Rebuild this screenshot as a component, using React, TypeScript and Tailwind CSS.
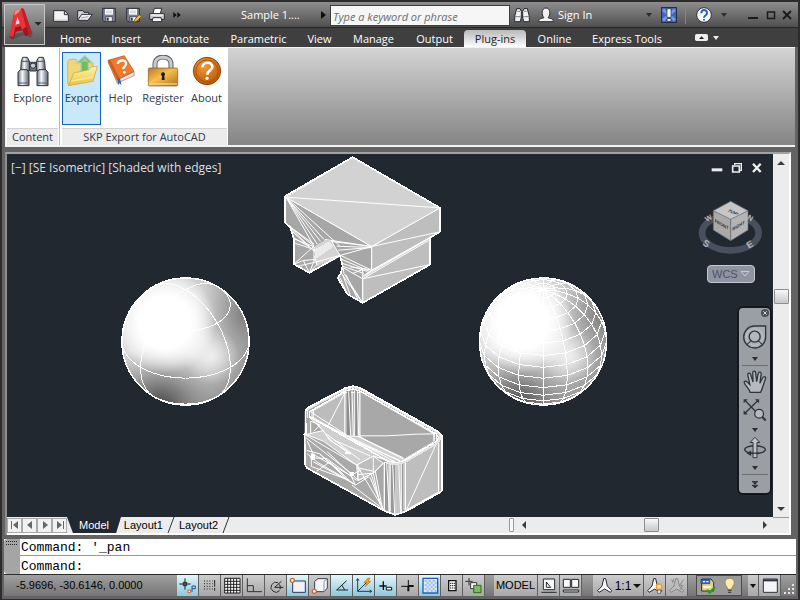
import type { ReactNode } from 'react'

type ArtProps = {
  box: string
  className: string
  children: ReactNode
}

function Art({ box, className, children }: ArtProps) {
  return (
    <svg
      viewBox={box}
      className={`shrink-0 ${className}`}
      fill="none"
      aria-hidden="true"
    >
      {children}
    </svg>
  )
}

/* ---------- Quick access icons ---------- */

function NewIcon() {
  return (
    <Art box="0 0 48 48" className="h-4 w-4">
      <path d="M2 11h33l11 11v21H2z" fill="#f4f4f6" stroke="#2c2f38" strokeWidth="3" />
      <path d="M34 12v11h11" fill="#c9ccd4" stroke="#2c2f38" strokeWidth="3" />
      <path d="M6 39h37" stroke="#c4c6cc" strokeWidth="3" />
    </Art>
  )
}

function OpenIcon() {
  return (
    <Art box="0 0 48 48" className="h-4 w-4">
      <path d="M2 40V11h15l4 5h14v6" fill="#d4d6dc" stroke="#2c2f38" strokeWidth="3" />
      <path d="M2 40l12-18h32L33 40z" fill="#eceef2" stroke="#2c2f38" strokeWidth="3" />
      <path d="M12 33l22-4" stroke="#9da1ac" strokeWidth="3" />
    </Art>
  )
}

function SaveIcon({ pencil = false }: { pencil?: boolean }) {
  return (
    <Art box="0 0 48 48" className="h-4 w-4">
      <path d="M5 4h38v40H9l-4-4z" fill="#7b8190" stroke="#2c2f38" strokeWidth="3" />
      <path d="M12 6h24v17H12z" fill="#fafafa" />
      <path d="M15 12h18M15 17h18" stroke="#b5b9c3" strokeWidth="2" />
      <path d="M14 29h20v14H14z" fill="#f0f0f0" stroke="#2c2f38" strokeWidth="2" />
      <path d="M17 32h6v9h-6z" fill="#2c2f38" />
      {pencil && (
        <path d="M27 46l3-10 13-13 6 6-13 13z" fill="#f3b73a" stroke="#6b4312" strokeWidth="2" />
      )}
    </Art>
  )
}

function PrintIcon() {
  return (
    <Art box="0 0 48 48" className="h-4 w-4">
      <path d="M12 20L16 4h22l-4 16z" fill="#fff" stroke="#2c2f38" strokeWidth="3" />
      <path d="M2 20h44v17H2z" fill="#c9ccd3" stroke="#2c2f38" strokeWidth="3" />
      <path d="M5 24h38" stroke="#fff" strokeWidth="3" />
      <path d="M12 32h24l3 12H9z" fill="#f7f7f7" stroke="#2c2f38" strokeWidth="3" />
    </Art>
  )
}

function SearchIcon() {
  return (
    <Art box="0 0 48 48" className="h-4 w-4">
      <path d="M17 12h14v14H17z" fill="#9a9da5" stroke="#23262e" strokeWidth="3" />
      <path d="M2 28L8 5h10l4 8v17l-3 14H2z" fill="#f1f1f3" stroke="#23262e" strokeWidth="3" />
      <path d="M46 28L40 5H30l-4 8v17l3 14h17z" fill="#f1f1f3" stroke="#23262e" strokeWidth="3" />
      <path d="M3 29h17M28 29h17M10 13h8M30 13h8" stroke="#7d818b" strokeWidth="3" />
    </Art>
  )
}

/* ---------- Ribbon icons ---------- */

function BinocularsIcon() {
  return (
    <Art box="0 0 96 96" className="h-8 w-8">
      <defs>
        <linearGradient id="barrel" x1="0" x2="1" y1="0" y2="0">
          <stop offset="0" stopColor="#6d7583" />
          <stop offset=".4" stopColor="#f6f8fb" />
          <stop offset="1" stopColor="#58606e" />
        </linearGradient>
      </defs>
      <path d="M37 22h22v26H37z" fill="#6f7782" stroke="#30343d" strokeWidth="3" />
      <path d="M13 20l4-13h14l7 13v26H11z" fill="url(#barrel)" stroke="#30343d" strokeWidth="3" />
      <path d="M83 20L79 7H65l-7 13v26h27z" fill="url(#barrel)" stroke="#30343d" strokeWidth="3" />
      <path d="M3 52l7-8h20l6 8v40H3z" fill="url(#barrel)" stroke="#30343d" strokeWidth="3" />
      <path d="M93 52l-7-8H66l-6 8v40h33z" fill="url(#barrel)" stroke="#30343d" strokeWidth="3" />
      <path d="M13 19h24M59 19h24" stroke="#4d5461" strokeWidth="3" />
      <circle cx="48" cy="32" r="8" fill="#c7ccd4" stroke="#30343d" strokeWidth="3" />
      <path d="M5 84h30M61 84h30" stroke="#5c6470" strokeWidth="3" />
    </Art>
  )
}

function ExportIcon() {
  return (
    <Art box="0 0 96 96" className="h-8 w-8">
      <defs>
        <linearGradient id="folder" x1="0" x2="0" y1="0" y2="1">
          <stop offset="0" stopColor="#fdf5b4" />
          <stop offset="1" stopColor="#e9c23f" />
        </linearGradient>
      </defs>
      <path d="M5 86V20l5-7h20l5 8h42l4 5v42z" fill="#efd676" stroke="#c9a53c" strokeWidth="2" />
      <path d="M56 2l24 22H67v28H45V24H32z" fill="#6fbf55" stroke="#b3cfb0" strokeWidth="4" />
      <path d="M56 8l12 12H44z" fill="#9ccf90" />
      <path d="M7 92l16-38 46-10 6-8 19-2-13 45z" fill="url(#folder)" stroke="#cda12d" strokeWidth="2" />
      <path d="M16 78l66-12" stroke="#f9e78f" strokeWidth="4" />
    </Art>
  )
}

function HelpBookIcon() {
  return (
    <Art box="0 0 96 96" className="h-8 w-8">
      <path d="M9 20l28 64 50-22v-12L35 76z" fill="#e9ecf2" stroke="#a7663c" strokeWidth="2" />
      <path d="M9 16L58 2l29 47-50 25z" fill="#f07a2b" stroke="#b9521b" strokeWidth="2" />
      <path d="M9 16l7-1 28 56-7 4z" fill="#cf5a1b" />
      <path d="M38 27c1-12 22-15 25-3 2 9-8 10-8 18" stroke="#fff" strokeWidth="7" />
      <circle cx="58" cy="52" r="4" fill="#fff" />
      <path d="M37 73l8-3 5 20-7-5-4 6z" fill="#1d6fc4" />
    </Art>
  )
}

function LockIcon() {
  return (
    <Art box="0 0 96 96" className="h-8 w-8">
      <defs>
        <linearGradient id="lock" x1="0" x2="1" y1="0" y2="1">
          <stop offset="0" stopColor="#b97a22" />
          <stop offset=".45" stopColor="#f6bf4e" />
          <stop offset="1" stopColor="#b0701a" />
        </linearGradient>
      </defs>
      <path d="M24 44V27C24-1 72-1 72 27v17" stroke="#5f6369" strokeWidth="15" />
      <path d="M24 44V27C24 0 72 0 72 27v17" stroke="#c9ccd1" strokeWidth="9" />
      <rect x="4" y="39" width="88" height="54" rx="4" fill="url(#lock)" stroke="#87561a" strokeWidth="2" />
      <path d="M6 87h84" stroke="#f6d594" strokeWidth="4" />
      <circle cx="48" cy="58" r="6" fill="#1a1a1a" />
      <path d="M46 58h5l2 17h-9z" fill="#1a1a1a" />
    </Art>
  )
}

function AboutIcon() {
  return (
    <Art box="0 0 96 96" className="h-8 w-8">
      <defs>
        <radialGradient id="about" cx=".4" cy=".3" r=".7">
          <stop offset="0" stopColor="#f39b3a" />
          <stop offset="1" stopColor="#c05806" />
        </radialGradient>
      </defs>
      <circle cx="48" cy="48" r="41" fill="url(#about)" stroke="#8a4207" strokeWidth="3" />
      <circle cx="48" cy="48" r="33" stroke="#a4560f" strokeWidth="3" />
      <path d="M34 37c1-18 31-18 30-1-1 11-15 10-15 23" stroke="#fff" strokeWidth="8" />
      <circle cx="48" cy="70" r="5" fill="#fff" />
    </Art>
  )
}

/* ---------- Model space geometry ---------- */

const ELEVATION = Math.atan(1 / Math.SQRT2)

type SphereProps = {
  cx: number
  cy: number
  r: number
  meridians: number[]
  latitudes: number[]
  step: number
}

function project(lat: number, lon: number, r: number) {
  const p = (lat * Math.PI) / 180
  const t = (lon * Math.PI) / 180
  const z = Math.sin(p)
  const side = Math.cos(p) * Math.sin(t)
  const depth = Math.cos(p) * Math.cos(t)
  return {
    x: side * r,
    y: (depth * Math.sin(ELEVATION) - z * Math.cos(ELEVATION)) * r,
    front: z * Math.sin(ELEVATION) + depth * Math.cos(ELEVATION) > -0.01,
  }
}

function trace(points: { x: number; y: number; front: boolean }[]) {
  let d = ''
  let down = false
  points.forEach((p) => {
    if (p.front) {
      d += `${down ? 'L' : 'M'}${p.x.toFixed(1)} ${p.y.toFixed(1)}`
    }
    down = p.front
  })
  return d
}

function range(from: number, to: number, step: number) {
  const out: number[] = []
  for (let v = from; v <= to + 0.001; v += step) out.push(v)
  return out
}

function Sphere({ cx, cy, r, meridians, latitudes, step }: SphereProps) {
  const lines = [
    ...meridians.map((lon) =>
      trace(range(-90, 90, step).map((lat) => project(lat, lon, r)))
    ),
    ...latitudes.map((lat) =>
      trace(range(0, 360, step * 2).map((lon) => project(lat, lon, r)))
    ),
  ]

  return (
    <g transform={`translate(${cx} ${cy})`}>
      <circle r={r} fill="url(#ballBase)" />
      <circle r={r} fill="url(#ballShade)" />
      <circle r={r} fill="url(#ballTop)" />
      <circle r={r} fill="url(#ballGlint)" />
      <circle r={r} fill="url(#ballLight)" />
      <path d={lines.join('')} stroke="#fff" shapeRendering="crispEdges" />
      <circle r={r} stroke="#fff" strokeWidth="1.500" shapeRendering="crispEdges" />
    </g>
  )
}

function SteppedBlock() {
  return (
    <g
      transform="translate(270 150) scale(.33333)"
      stroke="#fff"
      strokeWidth="3"
      strokeLinejoin="round"
      shapeRendering="crispEdges"
    >
      <path d="M48 143L305 291V362L278 388V460L232 434 203 385 213 370 218 350 210 320 118 370 72 344V268L60 232 45 220V143z" fill="#a7a7a7" />
      <path d="M305 291L510 175V247L481 264V345L278 460V380L305 362z" fill="#bebebe" />
      <path d="M248 23L510 175 305 291 48 143z" fill="#d2d2d2" />
      <path d="M132 292L165 272 185 276 210 318 140 352z" fill="#d4d4d4" stroke="none" />
      <path d="M132 300L178 276 192 290 138 328z" fill="#ebebeb" stroke="none" />
      <path d="M48 143L510 175M305 291L510 247M278 388L481 270M278 388L481 345M290 372L510 247M283 380L495 257M305 362L480 264" />
      <path d="M48 143L132 290M48 143L142 284M48 143L152 276M48 143L162 270M48 143L210 290M45 220L132 290M52 226L132 305M60 240L118 292M60 232L132 284M66 262L118 292M72 268L132 292V334M72 280L132 300M72 344L132 290M72 344L100 333 134 330 118 370M84 350L136 338 210 318M100 333L118 370M134 320L140 345 118 370" />
      <path d="M165 270L305 291M185 276L305 291M185 276L210 318M200 290L305 294M205 302L305 294M210 318L305 291M212 318L305 362M216 330L300 366M218 342L292 366M218 350L282 372M222 356L278 388M240 352L300 360M248 372L278 360V388" />
      <path d="M218 350L222 372 278 460M213 370L278 460M218 376L240 434M228 376L264 450M210 384L232 434M278 388V460" />
      <path d="M248 23L510 175V247L481 264V345L278 460 232 434 203 385 213 370 218 350 210 318 118 370 72 344V268L60 232 45 220V140z" strokeWidth="5" />
      <path d="M305 291V362" strokeWidth="4" />
    </g>
  )
}

function OpenBox() {
  return (
    <g
      transform="translate(290 375) scale(.33333)"
      stroke="#fff"
      strokeWidth="3"
      strokeLinejoin="round"
      shapeRendering="crispEdges"
    >
      <path d="M46 110L165 42 190 35 212 42 446 172 457 186V348L345 412 315 421 285 410 50 280 45 270z" fill="#a9a9a9" />
      <path d="M70 108L165 54V184L100 150 70 130z" fill="#bcbcbc" />
      <path d="M165 54H210V186H165z" fill="#b0b0b0" />
      <path d="M172 50h10v134h-10zM192 50h8v134h-8z" fill="#8e8e8e" stroke="none" />
      <path d="M210 50L432 178V202L330 262 210 186z" fill="#a8a8a8" />
      <path d="M210 184L290 184 380 179 435 178M165 54L115 152" />
      <path d="M346 262L446 204V352L346 408z" fill="#bebebe" />
      <path d="M283 264L346 262V410L315 420 283 408z" fill="#989898" />
      <path d="M294 266h8v144h-8zM322 268h10v148h-10zM338 266h8v142h-8z" fill="#c6c6c6" stroke="none" />
      <path d="M283 264V408M290 266L298 412M300 268V414M308 268L314 418M318 268V418M326 268L332 416M334 266V414M346 262V408M438 210L350 404M446 204V352" />
      <path d="M176 50L182 184M186 48L190 184M194 48V184M202 50L206 184M170 184L340 256" />
      <path d="M60 130L170 184 205 186 345 256 320 266 250 245 200 272 100 200 48 180 100 168z" fill="#cfcfcf" />
      <path d="M200 272L250 245 280 266 250 296 204 318z" fill="#bdbdbd" />
      <path d="M62 112L300 266M66 128L315 262M100 150L330 260M170 190L330 258M205 186L340 250M80 146L125 200 182 240M100 168L118 196 176 232M112 180L210 256M130 196L240 244M72 170L90 152 62 140V176" />
      <path d="M48 182L200 272 283 408M48 190L188 300 204 318M52 200L70 240 180 302M50 228L90 238 176 320M52 238L80 262 190 326M60 250L110 252 200 318M64 236V276L180 318M70 262L196 330M90 240L160 300M112 232L180 296M80 290L120 262 190 330M204 270V318L250 296V245M204 280L250 290M204 300L250 296L280 266M188 300L214 286M180 296L196 332 238 306" />
      <path d="M250 296L270 390M256 290L276 396M244 300L272 390M240 308L280 406M186 332L280 404" />
      <path d="M165 232h18v8h-18zM180 292h12v14h-12zM64 240h10v16h-10z" fill="#fff" stroke="none" />
      <path d="M58 112L165 50 190 43 210 50 438 178 446 190 438 202 345 257 318 266 298 262 60 128z" stroke="#fff" strokeWidth="4" />
      <path d="M50 106L165 44 190 37 212 44 446 176 452 190 442 206 346 262 316 270 292 264" stroke="#e4e4e4" strokeWidth="6" />
      <path d="M432 178V200M440 178V200M52 104V130M66 110V130" />
      <path d="M46 110L52 100 165 41 190 35 212 41 446 172 457 186V348L446 356 345 412 315 421 285 410 50 280 45 270V236L43 180 48 176z" strokeWidth="5" />
    </g>
  )
}

function ModelScene() {
  return (
    <svg
      viewBox="7 155 766 362"
      className="h-full w-full"
      fill="none"
      role="img"
      aria-label="Model space"
    >
      <defs>
        <radialGradient id="ballBase" cx=".34" cy=".36" r=".72">
          <stop offset="0" stopColor="#fff" />
          <stop offset=".45" stopColor="#e2e2e2" />
          <stop offset="1" stopColor="#979797" />
        </radialGradient>
        <radialGradient id="ballShade" cx=".3" cy="1.020" r=".5">
          <stop offset="0" stopColor="#3f3f3f" />
          <stop offset=".4" stopColor="#6c6c6c" stopOpacity=".7" />
          <stop offset="1" stopColor="#a0a0a0" stopOpacity="0" />
        </radialGradient>
        <radialGradient id="ballTop" cx="1" cy=".28" r=".42">
          <stop offset="0" stopColor="#777" />
          <stop offset="1" stopColor="#a0a0a0" stopOpacity="0" />
        </radialGradient>
        <radialGradient id="ballGlint" cx=".71" cy=".62" r=".22">
          <stop offset="0" stopColor="#fff" stopOpacity=".7" />
          <stop offset="1" stopColor="#fff" stopOpacity="0" />
        </radialGradient>
        <radialGradient id="ballLight" cx=".34" cy=".35" r=".4">
          <stop offset="0" stopColor="#fff" />
          <stop offset=".5" stopColor="#fff" />
          <stop offset="1" stopColor="#fff" stopOpacity="0" />
        </radialGradient>
      </defs>
      <Sphere
        cx={185.5}
        cy={342}
        r={63.5}
        meridians={[45, 135, 225, 315]}
        latitudes={[-45, 0, 45]}
        step={5}
      />
      <Sphere
        cx={543}
        cy={342}
        r={63.5}
        meridians={range(0, 337.5, 22.5)}
        latitudes={range(-78.75, 78.75, 11.25)}
        step={11.25}
      />
      <SteppedBlock />
      <OpenBox />
    </svg>
  )
}

function ViewCube() {
  return (
    <Art box="26 150 198 165" className="h-[55px] w-[66px]">
      <ellipse cx="123" cy="249" rx="85" ry="52" stroke="#48505d" strokeWidth="20" />
      <path d="M72 182L124 206V272L72 240z" fill="#a9a9a9" stroke="#6a6d72" strokeWidth="2" />
      <path d="M176 182L124 206V272L176 240z" fill="#b4b4b4" stroke="#6a6d72" strokeWidth="2" />
      <path d="M124 154L176 182 124 208 72 182z" fill="#c6c6c6" stroke="#6a6d72" strokeWidth="2" />
      <g fill="#2e3136" fontFamily="Liberation Sans, sans-serif" fontWeight="700">
        <text transform="matrix(.88 .47 -.88 .47 113 182)" fontSize="15">TOP</text>
        <text transform="matrix(.85 .5 0 1 76 216)" fontSize="14">FRONT</text>
        <text transform="matrix(.85 -.5 0 1 129 243)" fontSize="14">RIGHT</text>
      </g>
      <g fill="#b2b5b9" fontFamily="Liberation Sans, sans-serif" fontWeight="700" fontSize="28">
        <text transform="translate(38 284) rotate(30)">S</text>
        <text transform="translate(178 296) rotate(-30)">E</text>
        <text transform="translate(172 206) rotate(30)" fontSize="22">N</text>
        <text transform="translate(52 216) rotate(-30)" fontSize="22">W</text>
      </g>
    </Art>
  )
}

/* ---------- Navigation bar ---------- */

function DropArrow() {
  return (
    <Art box="0 0 8 4" className="h-1 w-2">
      <path d="M1 0h6L4 4z" fill="#2a2d32" />
    </Art>
  )
}

function NavigationBar() {
  return (
    <div className="absolute right-px top-[152px] flex h-[189px] w-[35px] flex-col items-center rounded-md border-2 border-[#14181e] bg-[#9b9ea3]">
      <button type="button" aria-label="Close navigation bar" className="mr-px mt-px self-end">
        <Art box="0 0 24 24" className="h-2 w-2">
          <circle cx="12" cy="12" r="12" fill="#4b4e54" />
          <path d="M7 7l10 10M17 7L7 17" stroke="#d6d8dc" strokeWidth="3" />
        </Art>
      </button>
      <button type="button" aria-label="Steering wheel" className="mt-2 flex flex-col items-center gap-2">
        <Art box="157 109 70 70" className="h-6 w-6">
          <path d="M190 112h33v32a32 32 0 1 1-33-32z" fill="#a9adb4" stroke="#33373e" strokeWidth="4" />
          <circle cx="191" cy="144" r="24" stroke="#bfc2c7" strokeWidth="3" />
          <circle cx="191" cy="143" r="16" fill="#b3b6bc" stroke="#33373e" strokeWidth="4" />
          <path d="M180 155l-13 13M202 155l13 13" stroke="#33373e" strokeWidth="3" />
        </Art>
        <DropArrow />
      </button>
      <hr className="mt-1 w-[26px] border-[#6b6e73]" />
      <button type="button" aria-label="Pan" className="mt-1">
        <Art box="154 234 74 74" className="h-6 w-6">
          <path
            d="M176 303c-2-12-17-22-18-30-1-6 5-6 9-2l8 8-6-29c-1-8 7-9 9-1l7 22-1-28c0-7 9-7 9 0l3 27 5-25c2-7 10-5 9 2l-4 28 9-17c4-7 11-3 8 4-6 15-9 31-15 41z"
            fill="#b6b9c0"
            stroke="#2f333a"
            strokeWidth="4"
          />
        </Art>
      </button>
      <button type="button" aria-label="Zoom" className="mt-1 flex flex-col items-center gap-1.5">
        <Art box="154 318 76 74" className="h-6 w-6">
          <path d="M160 324l40 42M202 324l-43 42" stroke="#2f333a" strokeWidth="4" />
          <path d="M156 321h13l-13 13zM205 321v13l-13-13zM156 369v-13l13 13z" fill="#2f333a" />
          <circle cx="205" cy="367" r="14" fill="#b6b9c0" stroke="#2f333a" strokeWidth="4" />
          <path d="M215 377l11 11" stroke="#2f333a" strokeWidth="7" />
        </Art>
        <DropArrow />
      </button>
      <button type="button" aria-label="Orbit" className="mt-1 flex flex-col items-center gap-1.5">
        <Art box="154 434 74 70" className="h-6 w-6">
          <ellipse cx="191" cy="474" rx="32" ry="12" stroke="#2f333a" strokeWidth="4" />
          <path d="M185 499v-47h-9l15-16 15 16h-9v47z" fill="#c0c3c8" stroke="#2f333a" strokeWidth="3" />
          <path d="M165 485l14-8v17z" fill="#2f333a" />
          <path d="M176 485h26" stroke="#2f333a" strokeWidth="4" />
        </Art>
        <DropArrow />
      </button>
      <hr className="mt-1 w-[26px] border-[#6b6e73]" />
      <button type="button" aria-label="Customize navigation bar" className="mt-1.5 h-2">
        <Art box="0 0 24 24" className="h-2 w-2">
          <path d="M3 2h18M3 13h18" stroke="#22262c" strokeWidth="3" />
          <path d="M5 4h14l-7 7zM5 15h14l-7 7z" fill="#22262c" />
        </Art>
      </button>
    </div>
  )
}

/* ---------- Header ---------- */

const ribbonTabs = [
  { label: 'Home', className: 'w-[51px]' },
  { label: 'Insert', className: 'w-[50px]' },
  { label: 'Annotate', className: 'w-[69px]' },
  { label: 'Parametric', className: 'w-[77px]' },
  { label: 'View', className: 'w-[45px]' },
  { label: 'Manage', className: 'w-[63px]' },
  { label: 'Output', className: 'w-[59px]' },
  { label: 'Plug-ins', className: 'w-[62px]' },
  { label: 'Online', className: 'w-[57px]' },
  { label: 'Express Tools', className: 'w-[88px]' },
]

function Header() {
  return (
    <header className="flex h-[45px] shrink-0 bg-[linear-gradient(#8e8e8e,#4f4f4f_25px,#262626_25px,#262626_26px,#3f3f3f_26px)] text-[11px]">
      <button
        type="button"
        aria-label="Application menu"
        className="ml-0.5 mt-0.5 flex h-[41px] w-[41px] shrink-0 items-center justify-center border border-[#c6c6c6] bg-linear-to-b from-[#a4a4a4] to-[#5a5a5a]"
      >
        <Art box="20 20 110 110" className="h-9 w-9">
          <path d="M25 105l8 15 40-14 20 8 6-12-10-8z" fill="#3f3f3f" opacity=".5" />
          <path d="M43 32l25-8 28 74-20 12-9-19-20 5-7 21-13-4z" fill="#a3151d" />
          <path d="M43 32l21-8 14 56-12 10-4-12-17 5-6 28-12-2z" fill="#e5353b" />
          <path d="M64 24l8 2 24 72-10 6z" fill="#c11f27" />
          <path d="M52 50l7 20-13 4z" fill="#f3dede" />
          <path d="M43 32l21-8-8 12-13 10z" fill="#f58a8c" />
          <path d="M104 66h22l-11 11z" fill="#24272e" />
        </Art>
      </button>
      <div className="flex min-w-0 flex-1 flex-col">
        <div className="flex h-[26px] shrink-0 items-center">
          <div className="ml-2 flex items-center gap-2">
            <button type="button" aria-label="New"><NewIcon /></button>
            <button type="button" aria-label="Open"><OpenIcon /></button>
            <button type="button" aria-label="Save"><SaveIcon /></button>
            <button type="button" aria-label="Save As"><SaveIcon pencil /></button>
            <button type="button" aria-label="Plot"><PrintIcon /></button>
            <button type="button" aria-label="More">
              <Art box="0 0 24 24" className="h-2 w-2">
                <path d="M1 3l10 9-10 9zM13 3l10 9-10 9z" fill="#0d0d0d" />
              </Art>
            </button>
          </div>
          <span className="ml-15 w-20 truncate text-white">Sample 1....</span>
          <Art box="0 0 5 8" className="h-2 w-[5px]">
            <path d="M0 0l5 4-5 4z" fill="#0d0d0d" />
          </Art>
          <input
            type="text"
            aria-label="Search"
            placeholder="Type a keyword or phrase"
            className="ml-1 h-[21px] w-[180px] border border-[#3f3f3f] bg-[#f6f6f6] px-0.5 pt-0.5 italic text-[#6c6c6c] placeholder:text-[#6c6c6c]"
          />
          <button type="button" aria-label="Search help" className="ml-1">
            <SearchIcon />
          </button>
          <button type="button" className="ml-2 flex items-center gap-1 text-white">
            <Art box="0 0 48 48" className="h-4 w-4">
              <path d="M2 44c0-10 8-9 16-12-8-8-8-29 6-29s14 21 6 29c8 3 16 2 16 12z" fill="#f1f1f1" stroke="#2c2f38" strokeWidth="3" />
            </Art>
            Sign In
          </button>
          <div className="ml-auto flex items-center pr-1.5">
            <DropArrow />
            <button type="button" aria-label="Exchange" className="ml-2">
              <Art box="0 0 48 48" className="h-4 w-4">
                <path d="M1 1h46v46H1z" fill="#3f67bb" stroke="#1a2238" strokeWidth="3" />
                <path d="M6 8l36 32M42 8L6 40" stroke="#7799da" strokeWidth="9" />
                <path d="M18 5h12v26H18zM18 35h12v8H18z" fill="#fff" stroke="#1a2238" strokeWidth="2" />
              </Art>
            </button>
            <span className="ml-2 h-[18px] w-px bg-[#858585]" />
            <button type="button" aria-label="Help" className="ml-2.5 flex items-center gap-2">
              <Art box="0 0 48 48" className="h-4 w-4">
                <circle cx="24" cy="24" r="22" fill="#f8f8f8" stroke="#30343d" strokeWidth="3" />
                <path d="M16 19c0-13 17-13 17-1 0 8-9 7-9 14" stroke="#2464b9" strokeWidth="6" />
                <circle cx="24" cy="38" r="3" fill="#2464b9" />
              </Art>
              <DropArrow />
            </button>
            <button type="button" aria-label="Minimize" className="ml-5">
              <Art box="0 0 10 10" className="h-2.5 w-2.5">
                <path d="M0 8h10" stroke="#1b1b1b" strokeWidth="2" />
              </Art>
            </button>
            <button type="button" aria-label="Maximize" className="ml-2">
              <Art box="0 0 10 10" className="h-2.5 w-2.5">
                <path d="M1.500 2h7v6.500h-7z" stroke="#1b1b1b" strokeWidth="1.500" />
              </Art>
            </button>
            <button type="button" aria-label="Close" className="ml-1.5">
              <Art box="0 0 10 10" className="h-2.5 w-2.5">
                <path d="M1 1l8 8M9 1L1 9" stroke="#1b1b1b" strokeWidth="2" />
              </Art>
            </button>
          </div>
        </div>
        <nav className="ml-[5px] flex min-w-0 flex-1 items-end text-white">
          {ribbonTabs.map((tab) => (
            <button
              key={tab.label}
              type="button"
              className={`h-[17px] shrink-0 whitespace-nowrap leading-4 ${tab.className} ${
                tab.label === 'Plug-ins'
                  ? 'rounded-t-sm bg-linear-to-b from-[#b9b9b9] to-white text-[#1e1e1e]'
                  : ''
              }`}
            >
              {tab.label}
            </button>
          ))}
          <button type="button" aria-label="Minimize ribbon" className="mb-1.5 ml-6 flex items-center gap-1">
            <Art box="0 0 39 21" className="h-[7px] w-[13px]">
              <rect width="39" height="21" rx="5" fill="#eee" />
              <path d="M12 15h15l-7-8z" fill="#222" />
            </Art>
            <Art box="0 0 8 4" className="h-1 w-2">
              <path d="M1 0h6L4 4z" fill="#eee" />
            </Art>
          </button>
        </nav>
      </div>
    </header>
  )
}

const exportCommands = [
  { label: 'Export', icon: <ExportIcon />, className: 'w-[39px] border-[#1364b8] bg-[#c9e8fa]' },
  { label: 'Help', icon: <HelpBookIcon />, className: 'w-[39px] border-transparent' },
  { label: 'Register', icon: <LockIcon />, className: 'w-[46px] border-transparent' },
  { label: 'About', icon: <AboutIcon />, className: 'w-[41px] border-transparent' },
]

function Ribbon() {
  return (
    <section className="mx-[3px] flex h-[100px] shrink-0 border-b-2 border-l border-t border-[#f2f2f2] bg-linear-to-b from-[#d4d4d4] to-[#858585] text-[11px] text-[#2e3a4e]">
      <div className="flex w-[54px] flex-col border-r border-[#b9b9b9] bg-white">
        <button type="button" className="mt-[7px] flex flex-1 flex-col items-center gap-1">
          <BinocularsIcon />
          Explore
        </button>
        <div className="mx-px h-[17px] border-t border-[#d2d2d2] bg-[#ececec] text-center leading-4">
          Content
        </div>
      </div>
      <div className="flex w-[168px] flex-col bg-white pl-0.5">
        <div className="flex flex-1 pt-1">
          {exportCommands.map((command) => (
            <button
              key={command.label}
              type="button"
              className={`flex h-[73px] flex-col items-center gap-1 whitespace-nowrap border pt-0.5 ${command.className}`}
            >
              {command.icon}
              {command.label}
            </button>
          ))}
        </div>
        <div className="mr-px h-[17px] border-t border-[#d2d2d2] bg-[#ececec] text-center leading-4">
          SKP Export for AutoCAD
        </div>
      </div>
    </section>
  )
}

/* ---------- Drawing window ---------- */

function Arrow({ d }: { d: string }) {
  return (
    <Art box="0 0 8 8" className="h-2 w-2">
      <path d={d} fill="#3c3c3c" />
    </Art>
  )
}

function DocumentControls() {
  return (
    <div className="absolute right-2.5 top-2 flex gap-2">
      <button type="button" aria-label="Minimize drawing">
        <Art box="0 0 36 36" className="h-3 w-3">
          <path d="M2 19h32v9H2z" fill="#eee" />
        </Art>
      </button>
      <button type="button" aria-label="Restore drawing">
        <Art box="0 0 36 36" className="h-3 w-3">
          <path d="M11 9V5h20v20h-4" stroke="#eee" strokeWidth="4" />
          <path d="M5 12h20v18H5z" stroke="#eee" strokeWidth="5" />
        </Art>
      </button>
      <button type="button" aria-label="Close drawing">
        <Art box="0 0 36 36" className="h-3 w-3">
          <path d="M6 5l23 25M29 5L6 30" stroke="#eee" strokeWidth="7" />
        </Art>
      </button>
    </div>
  )
}

function VerticalScroll() {
  return (
    <div className="flex w-4 shrink-0 flex-col items-center bg-[#ececec]">
      <button type="button" aria-label="Scroll up" className="flex h-[17px] items-center">
        <Arrow d="M0 6l4-4 4 4z" />
      </button>
      <div className="flex-[118]" />
      <div className="h-[15px] w-[15px] rounded-[1px] border border-[#8d8d8d] bg-linear-to-b from-[#f8f8f8] to-[#c8c8c8]" />
      <div className="flex-[195]" />
      <button type="button" aria-label="Scroll down" className="flex h-[17px] items-center">
        <Arrow d="M0 2h8L4 6z" />
      </button>
    </div>
  )
}

const sheetArrows = [
  { label: 'First layout', d: 'M0 0h1v8H0zM7 0v8L2 4z' },
  { label: 'Previous layout', d: 'M6 0v8L1 4z' },
  { label: 'Next layout', d: 'M2 0v8l5-4z' },
  { label: 'Last layout', d: 'M7 0h1v8H7zM1 0v8l5-4z' },
]

function SheetEdge() {
  return (
    <Art box="0 0 8 16" className="ml-1 h-4 w-2">
      <path d="M7 0L1 16" stroke="#333" />
    </Art>
  )
}

function SheetBar() {
  return (
    <div className="flex h-[18px] shrink-0 items-center border-b-2 border-white bg-[#ececec] font-['Liberation_Sans',sans-serif] text-[11px] text-black">
      {sheetArrows.map((arrow) => (
        <button
          key={arrow.label}
          type="button"
          aria-label={arrow.label}
          className="flex h-[15px] w-[15px] items-center justify-center border border-[#aaa] bg-[#f2f2f2]"
        >
          <Art box="0 0 8 8" className="h-2 w-2">
            <path d={arrow.d} fill="#666" />
          </Art>
        </button>
      ))}
      <button
        type="button"
        className="h-4 w-[54px] bg-[#212830] leading-4 text-white [clip-path:polygon(0_0,100%_0,91%_100%,11%_100%)]"
      >
        Model
      </button>
      <button type="button" className="h-4 w-[42px] text-right leading-4">Layout1</button>
      <SheetEdge />
      <button type="button" className="ml-1 h-4 leading-4">Layout2</button>
      <SheetEdge />
      <div className="ml-auto flex w-[260px] items-center">
        <span className="h-3.5 w-[5px] rounded-[1px] border border-[#9b9b9b] bg-[#f8f8f8]" />
        <button type="button" aria-label="Scroll left" className="ml-1.5"><Arrow d="M6 0v8L2 4z" /></button>
        <span className="flex-[115]" />
        <span className="h-3.5 w-[15px] rounded-[1px] border border-[#8d8d8d] bg-linear-to-b from-[#f8f8f8] to-[#c8c8c8]" />
        <span className="flex-[101]" />
        <button type="button" aria-label="Scroll right"><Arrow d="M2 0v8l4-4z" /></button>
      </div>
      <span className="ml-1 h-full w-4 shrink-0 border-t border-[#9b9b9b]" />
    </div>
  )
}

function DrawingWindow() {
  return (
    <main className="ml-[3px] mr-[7px] mt-[5px] flex min-h-0 flex-1 flex-col border-l-2 border-r-2 border-t-2 border-l-[#8d8d8d] border-r-white border-t-[#a2a2a2]">
      <div className="flex min-h-0 flex-1">
        <div className="relative min-w-0 flex-1 bg-[#212830]">
          <ModelScene />
          <p className="absolute left-1 top-1.5 text-xs leading-4 text-[#dedfe1]">
            [−] [SE Isometric] [Shaded with edges]
          </p>
          <DocumentControls />
          <div className="absolute right-[9px] top-[46px] flex flex-col items-center gap-2.5">
            <ViewCube />
            <button
              type="button"
              className="flex h-[18px] w-12 items-center justify-between rounded border border-[#c5c8d2] bg-[#8f94a3] px-1 font-['Liberation_Sans',sans-serif] text-[11px] text-[#4e5360]"
            >
              WCS
              <Art box="0 0 10 6" className="h-1.5 w-2.5">
                <path d="M1 .500h8L5 5z" stroke="#c9ccd6" />
              </Art>
            </button>
          </div>
          <NavigationBar />
        </div>
        <VerticalScroll />
      </div>
      <SheetBar />
    </main>
  )
}

function CommandLine() {
  return (
    <section className="mx-0.5 mt-1 flex h-[35px] shrink-0 bg-white font-['Liberation_Mono',monospace] text-[13px] text-black">
      <div className="w-4 shrink-0 rounded-l bg-[#a5a5a5] pl-0.5 pt-0.5">
        <Art box="0 0 12 4" className="h-1 w-3">
          <path d="M0 .500h12M0 3.500h12" stroke="#222" strokeDasharray="1 1" />
        </Art>
      </div>
      <div className="flex-1">
        <div className="h-[17px] border-b border-[#999] pl-px leading-[18px]">Command: '_pan</div>
        <label className="flex h-[18px] pl-px leading-[22px]">
          Command:
          <input type="text" className="ml-2 min-w-0 flex-1 outline-none" />
        </label>
      </div>
    </section>
  )
}

/* ---------- Status bar ---------- */

const toggles: { label: string; on: boolean; art: ReactNode }[] = [
  {
    label: 'Infer constraints',
    on: true,
    art: (
      <>
        <path d="M4 24h34M21 7v34" stroke="#222" strokeWidth="3" />
        <path d="M16 19h10v10H16z" stroke="#222" strokeWidth="3" />
        <path d="M42 48V30h10v8H42" stroke="#2450a0" strokeWidth="3" />
        <path d="M30 42h8v8h-8z" fill="#fff" stroke="#d0602a" strokeWidth="3" />
      </>
    ),
  },
  {
    label: 'Snap',
    on: false,
    art: (
      <>
        <path d="M12 15h26M12 23h26M12 31h26M12 39h26" stroke="#222" strokeWidth="3" strokeDasharray="3 5" />
        <path d="M44 12v32" stroke="#222" strokeWidth="3" strokeDasharray="20 4" />
      </>
    ),
  },
  {
    label: 'Grid',
    on: false,
    art: (
      <path d="M8 7h46v44H8zM17 7v44M26 7v44M35 7v44M44 7v44M8 16h46M8 25h46M8 34h46M8 43h46" fill="#fff" stroke="#222" strokeWidth="3" />
    ),
  },
  {
    label: 'Ortho',
    on: false,
    art: <path d="M10 7v40h44M10 29h18v18" stroke="#333" strokeWidth="3" />,
  },
  {
    label: 'Polar',
    on: false,
    art: (
      <>
        <path d="M36 20a15 15 0 1 0 5 24" stroke="#333" strokeWidth="3" />
        <path d="M46 16L26 34h26M38 24c5 3 6 9 4 16" stroke="#222" strokeWidth="3" />
      </>
    ),
  },
  {
    label: 'Object snap',
    on: true,
    art: (
      <>
        <path d="M14 15h38v34H14z" fill="#f1f2f8" stroke="#2c3950" strokeWidth="3" />
        <circle cx="13" cy="13" r="6" fill="#fff" stroke="#dc6224" strokeWidth="4" />
      </>
    ),
  },
  {
    label: '3D object snap',
    on: false,
    art: (
      <>
        <path d="M14 16l10-8h28v28l-10 11H14z" fill="#f6f6fa" stroke="#3a4150" strokeWidth="3" />
        <path d="M42 16v30M42 16l9-7" stroke="#8f95a2" strokeWidth="3" />
        <circle cx="13" cy="46" r="6" fill="#fff" stroke="#dc6224" strokeWidth="4" />
      </>
    ),
  },
  {
    label: 'Object snap tracking',
    on: true,
    art: <path d="M44 14L14 42h34M30 28l8 14" stroke="#222" strokeWidth="3" />,
  },
  {
    label: 'Dynamic UCS',
    on: true,
    art: (
      <>
        <path d="M11 8v38h42M11 46l30-30M7 14l4-6 4 6M47 42l6 4-6 4" stroke="#2c3950" strokeWidth="3" />
        <path d="M42 6L30 20h9l-5 12 16-16h-8l6-9z" fill="#f4a52c" stroke="#c36a16" strokeWidth="2" />
      </>
    ),
  },
  {
    label: 'Dynamic input',
    on: true,
    art: (
      <>
        <path d="M10 30h22M22 16v26" stroke="#111" strokeWidth="4" />
        <path d="M31 34h16v8H31z" fill="#fff" stroke="#111" strokeWidth="3" />
      </>
    ),
  },
  {
    label: 'Lineweight',
    on: false,
    art: (
      <>
        <path d="M10 31h22M31 12v20" stroke="#111" strokeWidth="3" />
        <path d="M31 30h16M31 30v16" stroke="#111" strokeWidth="6" />
      </>
    ),
  },
  {
    label: 'Transparency',
    on: true,
    art: (
      <>
        <path d="M9 7h44v44H9z" fill="#dfecf8" stroke="#1d5fb5" strokeWidth="4" />
        <path d="M14 15h34M14 27h34M14 39h34" stroke="#9cbfe6" strokeWidth="6" strokeDasharray="6 6" />
        <path d="M20 21h30M20 33h30M20 45h30" stroke="#9cbfe6" strokeWidth="6" strokeDasharray="6 6" />
      </>
    ),
  },
  {
    label: 'Quick properties',
    on: false,
    art: (
      <>
        <path d="M20 14h22v30H20z" fill="#fff" stroke="#111" strokeWidth="4" />
        <path d="M24 22h15M24 29h15M24 36h15" stroke="#111" strokeWidth="3" strokeDasharray="4 2" />
      </>
    ),
  },
  {
    label: 'Selection cycling',
    on: false,
    art: (
      <>
        <path d="M4 16h22M15 6v22" stroke="#333" strokeWidth="3" />
        <path d="M20 20h18v18H20z" fill="#fff" stroke="#333" strokeWidth="3" />
        <path d="M29 28h22v22H29z" fill="#7dbb5c" stroke="#2b6a1f" strokeWidth="3" />
      </>
    ),
  },
]

function ScaleMark({ faded = false, children }: { faded?: boolean; children?: ReactNode }) {
  return (
    <Art box="0 0 60 60" className="h-5 w-5">
      <path
        d="M26 8h6l5 22 13 14-4 5-17-10-17 10-4-5 13-14z"
        fill={faded ? '#bdbdbd' : '#fafafa'}
        stroke={faded ? '#888' : '#252830'}
        strokeWidth="3"
      />
      {children}
    </Art>
  )
}

const cell = 'flex h-[21px] shrink-0 items-center justify-center border-r border-[#5f5f5f] bg-linear-to-b from-[#cdcdcd] to-[#a8a8a8]'

function StatusBar() {
  return (
    <footer className="mx-0.5 mb-[3px] flex h-[22px] shrink-0 items-end border-t border-[#2b2b2b] bg-linear-to-b from-[#a0a0a0] to-[#757575] font-['Liberation_Sans',sans-serif] text-[11px] text-black">
      <div className="flex h-[21px] min-w-0 flex-1 items-center truncate pl-3">
        -5.9696, -30.6146, 0.0000
      </div>
      {toggles.map((toggle) => (
        <button
          key={toggle.label}
          type="button"
          aria-label={toggle.label}
          aria-pressed={toggle.on}
          className={`flex h-[21px] w-[22px] shrink-0 items-center justify-center border-r border-[#5f5f5f] bg-linear-to-b ${
            toggle.on ? 'from-[#e3f6fb] to-[#8cc8dc]' : 'from-[#cdcdcd] to-[#a8a8a8]'
          }`}
        >
          <Art box="0 0 60 60" className="h-5 w-5">{toggle.art}</Art>
        </button>
      ))}
      <span className="w-[9px] shrink-0" />
      <button type="button" className={`${cell} w-[44px]`}>MODEL</button>
      <button type="button" aria-label="Quick view layouts" className={`${cell} w-[22px]`}>
        <Art box="0 0 60 60" className="h-5 w-5">
          <path d="M13 9h34v32H13z" fill="#f8f8f8" stroke="#252830" strokeWidth="3" />
          <path d="M7 49h46" stroke="#252830" strokeWidth="3" />
          <path d="M22 18v16h13z" stroke="#252830" strokeWidth="3" />
        </Art>
      </button>
      <button type="button" aria-label="Quick view drawings" className={`${cell} w-[22px]`}>
        <Art box="0 0 60 60" className="h-5 w-5">
          <path d="M7 10h21v24H7zM32 10h21v24H32z" fill="#f8f8f8" stroke="#252830" strokeWidth="3" />
          <path d="M7 42h46v6H7z" fill="#ddd" stroke="#252830" strokeWidth="3" />
        </Art>
      </button>
      <span className="w-[11px] shrink-0" />
      <button type="button" aria-label="Annotation scale" className={`${cell} w-[51px] text-xs`}>
        <ScaleMark />
        1:1
        <Art box="0 0 8 4" className="ml-0.5 h-1 w-2"><path d="M0 0h8L4 4z" fill="#111" /></Art>
      </button>
      <button type="button" aria-label="Annotation visibility" className={`${cell} w-[22px]`}>
        <ScaleMark>
          <circle cx="42" cy="32" r="8" fill="#ffe3a0" stroke="#e9a040" strokeWidth="4" />
          <path d="M38 42h9v10h-9z" fill="#f3f3f3" stroke="#444" strokeWidth="2" />
        </ScaleMark>
      </button>
      <button type="button" aria-label="Automatic scales" className={`${cell} w-[22px]`}>
        <ScaleMark faded>
          <path d="M12 10l10 10M20 8l-4 12" stroke="#8a8a8a" strokeWidth="3" />
          <path d="M50 10L38 28h10L36 46" stroke="#8a8a8a" strokeWidth="3" />
        </ScaleMark>
      </button>
      <div className="ml-2 mr-1.5 flex h-[21px] w-[46px] shrink-0 items-center justify-around border border-[#4b4b4b] bg-[#9a9a9a]">
        <Art box="0 0 54 54" className="h-[18px] w-[18px]">
          <path d="M8 6h28l8 10v26H8z" fill="#e9d579" stroke="#1c2f55" strokeWidth="3" />
          <path d="M6 8h26v12H6z" fill="#3a6fb8" stroke="#1c2f55" strokeWidth="2" />
          <path d="M12 14h6M22 14h6M12 30h24" stroke="#fff" strokeWidth="4" />
          <path d="M24 38l8 9 16-17" stroke="#2f9a2b" strokeWidth="7" />
        </Art>
        <Art box="0 0 54 54" className="h-[18px] w-[18px]">
          <path d="M20 37c0-8-8-11-8-20 0-18 28-18 28 0 0 9-8 12-8 20z" fill="#fdeab5" stroke="#a78850" strokeWidth="3" />
          <path d="M20 40h12M21 46h10" stroke="#4a4a4a" strokeWidth="4" />
        </Art>
      </div>
      <button type="button" aria-label="Status bar menu" className={`${cell} w-[11px]`}>
        <Art box="0 0 6 4" className="h-1 w-1.5"><path d="M0 0h6L3 4z" fill="#111" /></Art>
      </button>
      <button type="button" aria-label="Clean screen" className={`${cell} w-[22px]`}>
        <Art box="0 0 60 60" className="h-5 w-5">
          <path d="M10 9h42v40H10z" fill="#f5f5f8" stroke="#2b3140" strokeWidth="3" />
          <path d="M10 13h42" stroke="#2b3140" strokeWidth="6" />
        </Art>
      </button>
      <Art box="2 0 15 21" className="h-[21px] w-[15px]">
        <path d="M13 9h2v2h-2zM9 13h2v2H9zM13 13h2v2h-2zM5 17h2v2H5zM9 17h2v2H9zM13 17h2v2h-2z" fill="#e4e4e4" />
      </Art>
    </footer>
  )
}

export default function App() {
  return (
    <div className="flex h-screen min-h-[420px] flex-col overflow-hidden border-x-2 border-b border-t-2 border-[#2e2b2e] bg-[#636363] font-['Open_Sans','Noto_Sans',sans-serif] text-xs">
      <Header />
      <Ribbon />
      <DrawingWindow />
      <CommandLine />
      <StatusBar />
    </div>
  )
}
